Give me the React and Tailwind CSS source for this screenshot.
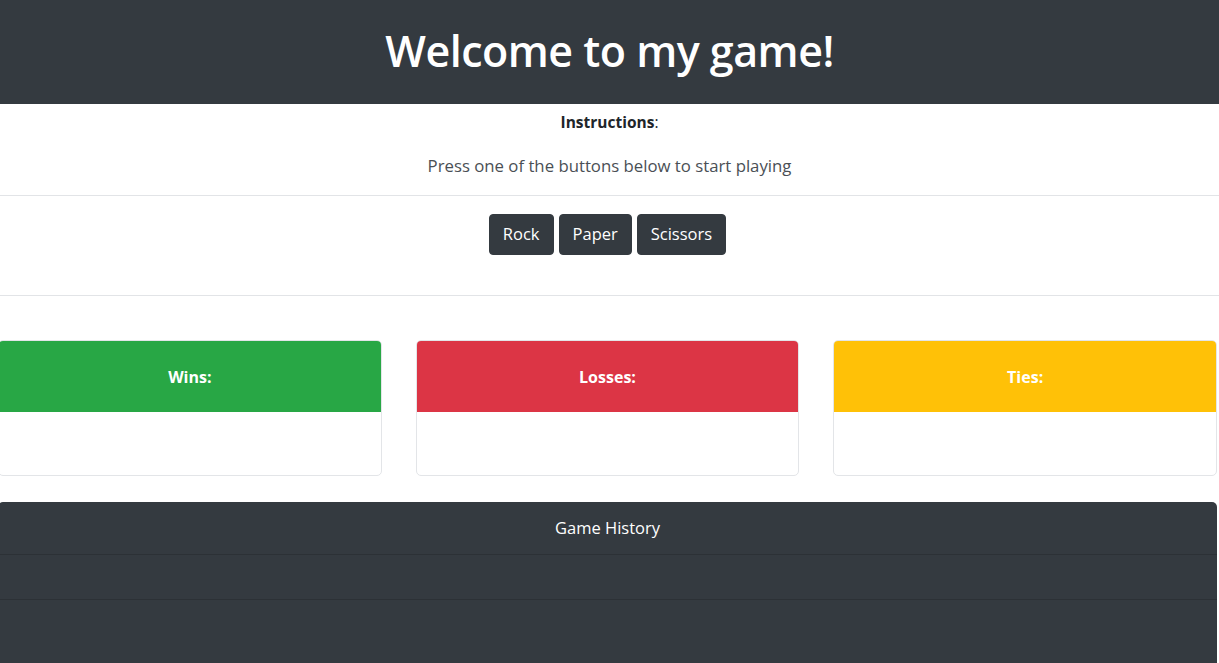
import React from 'react';

const font = { fontFamily: '"Open Sans", "Noto Sans", sans-serif' };

const ScoreCard = ({ label, color }) => (
  <div className="rounded-[5px] border border-[#e3e5e8] bg-white overflow-hidden">
    <div className={`h-[71px] flex items-center justify-center text-white font-bold text-[16px] ${color}`}>
      {label}
    </div>
    <div className="h-[63px]" />
  </div>
);

const App = () => {
  const moves = ['Rock', 'Paper', 'Scissors'];

  return (
    <div className="min-h-[663px] bg-white overflow-hidden text-[#212529]" style={font}>
      {/* header */}
      <header className="h-[104px] pb-[4px] bg-[#343a40] flex items-center justify-center">
        <h1 className="text-white text-[43px] font-semibold tracking-[-0.5px] leading-none">Welcome to my game!</h1>
      </header>

      {/* instructions */}
      <div className="text-center">
        <p className="pt-[4px] text-[15.5px] leading-[28px]"><span className="font-bold">Instructions</span>:</p>
        <p className="mt-[16px] pb-[15px] text-[16.75px] leading-[28px] text-[#4a4f55]">Press one of the buttons below to start playing</p>
      </div>

      <div className="border-t border-[#e2e4e7]" />

      {/* buttons */}
      <div className="h-[99px] pt-[18px] pr-[4px] flex justify-center gap-[5px]">
        {moves.map((m) => (
          <button
            key={m}
            className="h-[41px] px-[13px] rounded-[4px] bg-[#343a40] border border-[#343a40] text-white text-[16.5px] leading-none"
          >
            {m}
          </button>
        ))}
      </div>

      <div className="border-t border-[#e2e4e7]" />

      {/* score cards */}
      <div className="-ml-[2px] mr-[2px] mt-[44px] grid grid-cols-3 gap-[34px]">
        <ScoreCard label="Wins:" color="bg-[#28a745]" />
        <ScoreCard label="Losses:" color="bg-[#dc3545]" />
        <ScoreCard label="Ties:" color="bg-[#ffc107]" />
      </div>

      {/* history */}
      <div className="-ml-[2px] mr-[2px] mt-[26px] rounded-t-[5px] bg-[#343a40] text-white">
        <div className="h-[53px] flex items-center justify-center text-[16.5px] border-b border-[#2c3136]">
          Game History
        </div>
        <div className="h-[45px] border-b border-[#2c3136]" />
        <div className="h-[63px]" />
      </div>
    </div>
  );
};

export default App;
